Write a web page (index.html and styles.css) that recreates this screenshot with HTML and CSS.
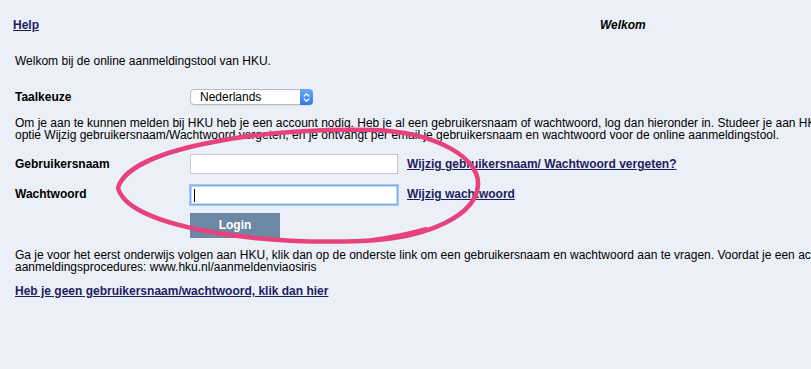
FILE: index.html
```html
<!DOCTYPE html>
<html lang="nl">
<head>
<meta charset="utf-8">
<title>HKU aanmelden</title>
<link rel="stylesheet" href="styles.css">
</head>
<body>
<div class="page">
  <div class="header">
    <a class="link help" href="#">Help</a>
    <span class="title">Welkom</span>
  </div>

  <p class="intro">Welkom bij de online aanmeldingstool van HKU.</p>

  <div class="lang-row">
    <span class="label">Taalkeuze</span>
    <div class="select">
      <span class="select-text">Nederlands</span>
      <span class="stepper">
        <svg width="7" height="11" viewBox="0 0 7 11"><path d="M1.2 4 L3.5 1.7 L5.8 4 M1.2 7 L3.5 9.3 L5.8 7" fill="none" stroke="#fff" stroke-width="1.3" stroke-linecap="round" stroke-linejoin="round"/></svg>
      </span>
    </div>
  </div>

  <p class="para">Om je aan te kunnen melden bij HKU heb je een account nodig. Heb je al een gebruikersnaam of wachtwoord, log dan hieronder in. Studeer je aan HKU en ben je je gebruikersnaam of wachtwoord vergeten, kies dan de<br>optie Wijzig gebruikersnaam/Wachtwoord vergeten, en je ontvangt per email je gebruikersnaam en wachtwoord voor de online aanmeldingstool.</p>

  <div class="form">
    <span class="label">Gebruikersnaam</span>
    <input class="field" type="text">
    <a class="link" href="#">Wijzig gebruikersnaam/ Wachtwoord vergeten?</a>

    <span class="label">Wachtwoord</span>
    <span class="field-wrap"><input class="field focused" type="password"><span class="caret"></span></span>
    <a class="link" href="#">Wijzig wachtwoord</a>

    <span class="empty"></span>
    <button class="login" type="button">Login</button>
  </div>

  <p class="para para2">Ga je voor het eerst onderwijs volgen aan HKU, klik dan op de onderste link om een gebruikersnaam en wachtwoord aan te vragen. Voordat je een account aanvraagt, lees dan eerst de informatie over de<br>aanmeldingsprocedures: www.hku.nl/aanmeldenviaosiris</p>

  <p class="bottom"><a class="link" href="#">Heb je geen gebruikersnaam/wachtwoord, klik dan hier</a></p>

  <svg class="scribble" width="811" height="369" viewBox="0 0 811 369">
    <path d="M118,188 C128,150 250,128 372,130 C440,132 480,160 478,185 C476,214 432,238 362,241 C250,245 128,226 118,188 Z" fill="none" stroke="#e8427c" stroke-width="4.5" stroke-linejoin="round"/>
    <path d="M372,240 C395,237 412,233 426,229" fill="none" stroke="#e8427c" stroke-width="4" stroke-linecap="round"/>
  </svg>
</div>
</body>
</html>
```

FILE: styles.css
```css
html, body {
  margin: 0;
  padding: 0;
  background: #ebeff7;
}

body {
  font-family: "Liberation Sans", Arial, Helvetica, sans-serif;
  font-size: 12px;
  color: #000;
}

.page {
  position: relative;
  width: 811px;
  height: 369px;
  overflow: hidden;
}

.link {
  color: #1e1e5e;
  font-weight: bold;
  text-decoration: underline;
}

.header {
  display: grid;
  grid-template-columns: 587px auto;
  padding: 18px 0 0 13px;
  line-height: 14px;
}

.title {
  font-weight: bold;
  font-style: italic;
}

.intro {
  margin: 22px 0 0 15px;
  line-height: 14px;
}

.lang-row {
  display: grid;
  grid-template-columns: 175px auto;
  margin: 21px 0 0 15px;
  height: 16px;
}

.label {
  font-weight: bold;
  line-height: 16px;
}

.select {
  position: relative;
  width: 123px;
  height: 16px;
  box-sizing: border-box;
  background: #fff;
  border: 1px solid #b9bdc4;
  border-radius: 4px;
  box-shadow: 0 1px 1px rgba(0, 0, 0, 0.08);
  display: flex;
  align-items: center;
  justify-content: space-between;
}

.select-text {
  padding-left: 9px;
  line-height: 14px;
}

.stepper {
  width: 13px;
  height: 16px;
  margin: -1px -1px -1px 0;
  background: linear-gradient(#6aa9f5, #2c7ae8);
  border-radius: 0 4px 4px 0;
  display: flex;
  align-items: center;
  justify-content: center;
}

.para {
  margin: 12px 0 0 15px;
  line-height: 12px;
  white-space: nowrap;
}

.form {
  display: grid;
  grid-template-columns: 175px 208px auto;
  grid-template-rows: 20px 20px 25px;
  margin: 13px 0 0 15px;
  align-items: center;
  row-gap: 10px;
}

.form .label {
  line-height: 20px;
}

.form .link {
  line-height: 20px;
  margin-left: 9px;
}

.form .login {
  grid-column: 2;
  margin-top: -3px;
}

.field {
  width: 208px;
  height: 20px;
  box-sizing: border-box;
  margin: 0;
  border: 1px solid #c9c9c9;
  background: #fff;
  padding: 0 3px;
  font: inherit;
  outline: none;
}

.field-wrap {
  position: relative;
  display: block;
  width: 208px;
  height: 20px;
  margin-top: 1px;
}

.field.focused {
  border: 1px solid #7eaaea;
  box-shadow: 0 0 0 1px #a8c8f4, inset 0 0 0 1px #c4daf8;
}

.caret {
  position: absolute;
  left: 4px;
  top: 4px;
  width: 1px;
  height: 13px;
  background: #000;
}

.login {
  width: 90px;
  height: 25px;
  border: none;
  padding: 0;
  background: #6c88a4;
  color: #fff;
  font: bold 12px "Liberation Sans", Arial, sans-serif;
}

.para2 {
  margin-top: 10px;
}

.bottom {
  margin: 11px 0 0 15px;
  line-height: 14px;
}

.scribble {
  position: absolute;
  left: 0;
  top: 0;
  pointer-events: none;
}
```
